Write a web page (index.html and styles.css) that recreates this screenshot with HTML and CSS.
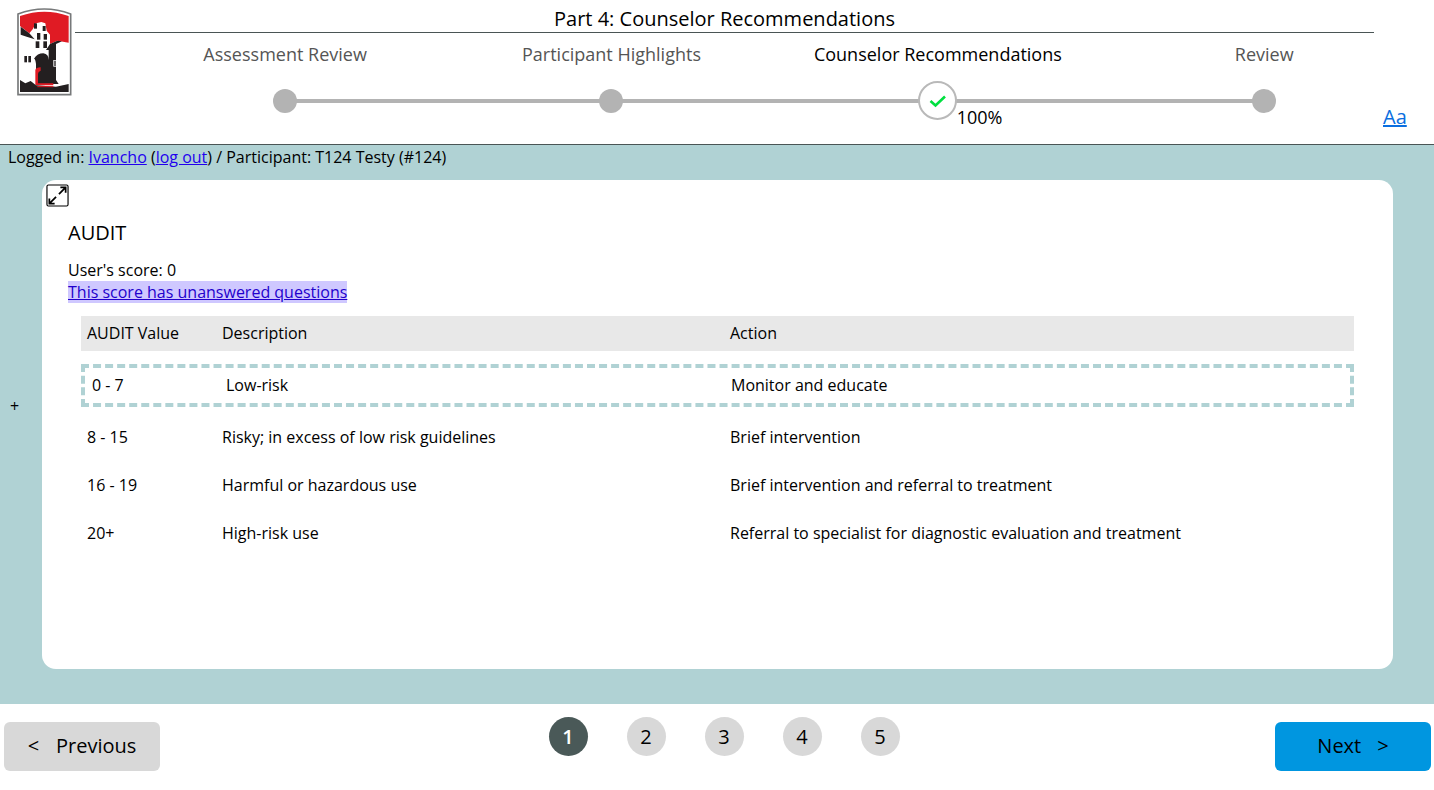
FILE: index.html
```html
<!DOCTYPE html>
<html lang="en">
<head>
<meta charset="utf-8">
<title>Part 4: Counselor Recommendations</title>
<link rel="stylesheet" href="styles.css">
</head>
<body>
<header class="top">
  <svg class="logo" width="56" height="89" viewBox="48 24 168 267">
    <path d="M54 42 Q133 12 212 42 V284 H54 Z" fill="#fff" stroke="#77797a" stroke-width="5"/>
    <path d="M60 48 Q133 22 206 48 V128 L172 122 L150 132 V104 L140 92 L136 70 L124 66 L108 70 L98 88 L88 100 L60 78 Z" fill="#e01b24"/>
    <path d="M62 80 L88 100 L104 118 L80 110 L62 104 Z" fill="#231f20"/>
    <rect x="102" y="70" width="9" height="16" fill="#231f20"/>
    <rect x="128" y="78" width="9" height="15" fill="#231f20"/>
    <rect x="111" y="99" width="10" height="20" fill="#231f20"/>
    <rect x="131" y="102" width="10" height="17" fill="#231f20"/>
    <rect x="107" y="124" width="11" height="20" fill="#231f20"/>
    <rect x="130" y="124" width="11" height="20" fill="#231f20"/>
    <path d="M138 150 L150 132 L172 122 L186 124 L168 132 V240 L176 252 H108 V192 Q106 176 102 176 Q112 160 130 160 Q146 162 146 180 L146 150 Z" fill="#231f20"/>
    <rect x="160" y="180" width="10" height="20" fill="#fff"/>
    <rect x="163" y="182" width="4" height="16" fill="#231f20"/>
    <rect x="73" y="168" width="8" height="19" fill="#231f20"/>
    <rect x="85" y="168" width="8" height="19" fill="#231f20"/>
    <path d="M106 256 V210 Q108 202 122 202 L122 212 Q114 214 114 222 V250 H160 V256 Z" fill="#e01b24"/>
    <path d="M60 240 L76 250 L92 243 L108 256 L168 260 L206 252 V276 H60 Z" fill="#231f20"/>
    <path d="M112 260 H160" stroke="#e01b24" stroke-width="3"/>
  </svg>
  <div class="progress">
    <h1 class="part-title">Part 4: Counselor Recommendations</h1>
    <div class="steps">
      <div class="step">
        <span class="step-label">Assessment Review</span>
        <span class="dot"></span>
      </div>
      <div class="step">
        <span class="step-label">Participant Highlights</span>
        <span class="dot"></span>
      </div>
      <div class="step step-current">
        <span class="step-label">Counselor Recommendations</span>
        <span class="dot-current">
          <svg width="18" height="14" viewBox="0 0 18 14"><path d="M1.5 7 L6.5 11.5 L16 2.5" fill="none" stroke="#00e040" stroke-width="2.6"/></svg>
        </span>
        <span class="percent">100%</span>
      </div>
      <div class="step">
        <span class="step-label">Review</span>
        <span class="dot"></span>
      </div>
    </div>
  </div>
  <a class="font-toggle" href="#">Aa</a>
</header>

<main class="stage">
  <p class="login">Logged in: <a href="#">Ivancho</a> (<a href="#">log out</a>) / Participant: T124 Testy (#124)</p>
  <div class="stage-row">
    <button class="side-toggle" type="button">+</button>
    <section class="card">
      <span class="expand">
        <svg width="23" height="23" viewBox="0 0 24 24">
          <rect x="1" y="1" width="22" height="22" rx="1.5" fill="#fff" stroke="#000" stroke-width="1.2"/>
          <path d="M13.5 10.5 L20 4 M15 3.5 H20.5 V9 M10.5 13.5 L4 20 M3.5 15 V20.5 H9" fill="none" stroke="#000" stroke-width="1.8"/>
        </svg>
      </span>
      <h2 class="card-title">AUDIT</h2>
      <p class="score">User's score: 0</p>
      <a class="score-note" href="#">This score has unanswered questions</a>
      <div class="table">
        <div class="row row-head"><span>AUDIT Value</span><span>Description</span><span>Action</span></div>
        <div class="row row-active"><span>0 - 7</span><span>Low-risk</span><span>Monitor and educate</span></div>
        <div class="row row-first"><span>8 - 15</span><span>Risky; in excess of low risk guidelines</span><span>Brief intervention</span></div>
        <div class="row"><span>16 - 19</span><span>Harmful or hazardous use</span><span>Brief intervention and referral to treatment</span></div>
        <div class="row"><span>20+</span><span>High-risk use</span><span>Referral to specialist for diagnostic evaluation and treatment</span></div>
      </div>
    </section>
  </div>
</main>

<footer class="bottom">
  <a class="btn btn-prev" href="#"><span>&lt;</span><span>Previous</span></a>
  <nav class="pages">
    <a class="page page-on" href="#">1</a>
    <a class="page" href="#">2</a>
    <a class="page" href="#">3</a>
    <a class="page" href="#">4</a>
    <a class="page" href="#">5</a>
  </nav>
  <a class="btn btn-next" href="#"><span>Next</span><span>&gt;</span></a>
</footer>
</body>
</html>
```

FILE: styles.css
```css
* { box-sizing: border-box; }
html, body { margin: 0; height: 100%; }
body {
  width: 1434px;
  height: 790px;
  overflow: hidden;
  background: #fff;
  color: #000;
  font-family: "Open Sans", sans-serif;
  font-size: 16px;
  display: flex;
  flex-direction: column;
}
.top {
  position: relative;
  height: 145px;
  flex: none;
  border-bottom: 1px solid #4a5555;
  display: flex;
  align-items: flex-start;
}
.logo { margin: 8px 0 0 16px; flex: none; }
.progress { margin-left: 3px; flex: none; width: 1299px; }
.part-title {
  margin: 0;
  padding-top: 6px;
  height: 33px;
  line-height: 26px;
  font-size: 20px;
  font-weight: 400;
  text-align: center;
  border-bottom: 1px solid #4a5555;
}
.steps {
  display: grid;
  grid-template-columns: repeat(4, 326.4px);
  margin-left: 46.9px;
  position: relative;
  width: 1306px;
}
.step {
  display: flex;
  flex-direction: column;
  align-items: center;
  position: relative;
}
.step-label {
  margin-top: 8px;
  height: 26px;
  line-height: 26px;
  font-size: 18px;
  color: #555;
}
.step-current .step-label { color: #000; }
.dot {
  margin-top: 22px;
  width: 24px;
  height: 24px;
  border-radius: 50%;
  background: #b3b3b3;
  position: relative;
  z-index: 1;
}
.dot-current {
  margin-top: 14px;
  width: 39px;
  height: 39px;
  border-radius: 50%;
  background: #fff;
  border: 2px solid #b9b9b9;
  display: flex;
  align-items: center;
  justify-content: center;
  position: relative;
  z-index: 1;
}
.steps::before {
  content: "";
  position: absolute;
  left: 163px;
  width: 978px;
  top: 66px;
  height: 4px;
  background: #b3b3b3;
}
.percent {
  position: absolute;
  left: 182px;
  top: 72px;
  font-size: 18px;
  line-height: 24px;
}
.font-toggle {
  position: absolute;
  left: 1383px;
  top: 103px;
  font-size: 20px;
  line-height: 27px;
  color: #0a6ee0;
}
.stage {
  flex: none;
  height: 559px;
  background: #b0d2d4;
}
.login {
  margin: 0;
  padding: 1px 0 0 8px;
  height: 35px;
  line-height: 22px;
}
.login a { color: #2200ee; }
.stage-row { display: flex; align-items: flex-start; }
.side-toggle {
  width: 42px;
  height: 452px;
  padding: 0 13px 0 0;
  border: 0;
  background: none;
  font: inherit;
  font-size: 16px;
  color: #000;
}
.card {
  position: relative;
  width: 1351px;
  height: 489px;
  background: #fff;
  border-radius: 14px;
  padding: 39px 26px 0;
}
.expand { position: absolute; left: 4px; top: 4px; width: 24px; height: 24px; }
.expand svg { display: block; }
.card-title { margin: 0; font-size: 20px; font-weight: 400; line-height: 28px; }
.score { margin: 12px 0 0; line-height: 22px; }
.score-note {
  display: inline-block;
  line-height: 22px;
  color: #2200cc;
  background: #cfc8ff;
}
.table { width: 1273px; margin: 13px 0 0 13px; }
.row {
  display: grid;
  grid-template-columns: 135px 508px 630px;
  height: 48px;
  align-items: center;
  padding-left: 6px;
}
.row span { display: block; }
.row-head { height: 35px; padding-bottom: 2px; background: #e8e8e8; }
.row-active {
  margin-top: 13px;
  height: 43px;
  border: 4px dashed #b0d2d4;
  padding-left: 7px;
  padding-bottom: 2px;
  grid-template-columns: 134px 505px 620px;
}
.row-first { margin-top: 6px; }
.bottom {
  flex: 1;
  position: relative;
  display: flex;
  justify-content: space-between;
  padding: 18px 3px 0 4px;
  align-items: flex-start;
}
.btn {
  width: 156px;
  height: 49px;
  border-radius: 6px;
  display: flex;
  align-items: center;
  justify-content: center;
  gap: 17px;
  font-size: 20px;
  line-height: 46px;
  padding-bottom: 2px;
  color: #000;
  text-decoration: none;
}
.btn-prev { background: #d8d8d8; }
.btn-next { background: #0096e0; gap: 16px; }
.pages {
  position: absolute;
  left: 549px;
  top: 13px;
  display: flex;
  gap: 39px;
}
.page {
  width: 39px;
  height: 39px;
  border-radius: 50%;
  background: #d8d8d8;
  display: flex;
  align-items: center;
  justify-content: center;
  font-size: 20px;
  padding-right: 1px;
  color: #000;
  text-decoration: none;
}
.page-on { background: #4a5958; color: #fff; font-weight: 600; }
```
